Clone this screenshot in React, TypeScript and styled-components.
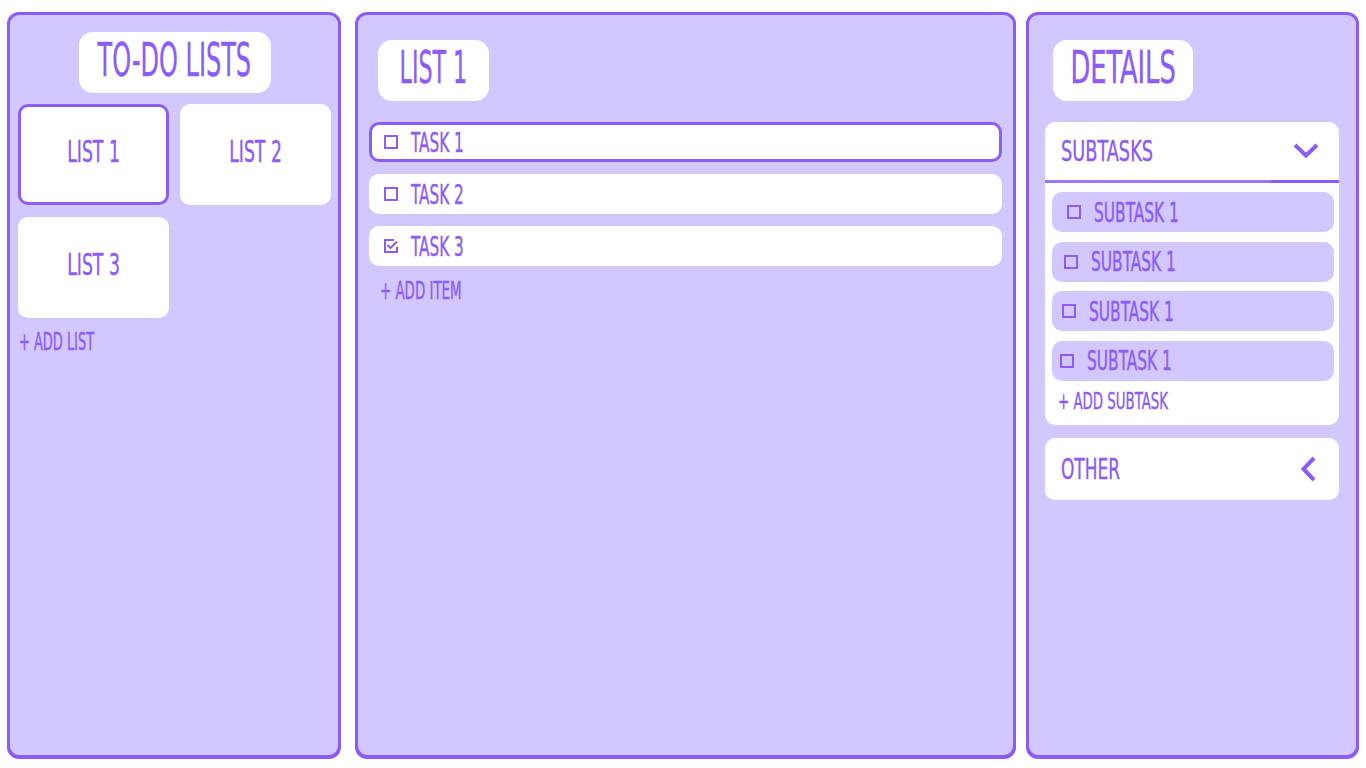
import styled, { createGlobalStyle } from "styled-components";

const PURPLE = "#8b5cf6";
const LAVENDER = "#d3c7ff";

const GlobalStyle = createGlobalStyle`
  html, body {
    margin: 0;
    padding: 0;
    background: #ffffff;
  }
  body {
    font-family: "Liberation Sans Narrow", "DejaVu Sans Condensed", "Liberation Sans", sans-serif;
    color: ${PURPLE};
  }
`;

const Page = styled.main`
  box-sizing: border-box;
  height: 100vh;
  padding: 12px 8px 10px 7px;
  display: flex;
`;

const Panel = styled.section<{ $pad: string; $width: number; $ml?: number }>`
  box-sizing: border-box;
  flex: 0 0 ${({ $width }) => $width}px;
  margin-left: ${({ $ml }) => $ml ?? 0}px;
  background: ${LAVENDER};
  border: 3px solid ${PURPLE};
  border-radius: 12px;
  box-shadow: 0 1px 0 ${PURPLE};
  padding: ${({ $pad }) => $pad};
  display: flex;
  flex-direction: column;
`;

/* condensed caps, stand-in for a Bebas style face */
const Label = styled.span<{ $size: number; $sx?: number; $origin?: string }>`
  display: inline-block;
  font-size: ${({ $size }) => $size}px;
  line-height: 1;
  white-space: nowrap;
  -webkit-text-stroke: 0.4px currentColor;
  transform: scaleX(${({ $sx }) => $sx ?? 0.62});
  transform-origin: ${({ $origin }) => $origin ?? "left center"};
`;

const TitlePill = styled.div<{ $width: number; $offset?: number; $center?: boolean }>`
  box-sizing: border-box;
  width: ${({ $width }) => $width}px;
  height: 61px;
  padding-bottom: 6px;
  background: #fff;
  border-radius: 14px;
  display: flex;
  align-items: center;
  justify-content: center;
  align-self: ${({ $center }) => ($center ? "center" : "flex-start")};
  margin-left: ${({ $offset }) => $offset ?? 0}px;
`;

const ListGrid = styled.div`
  margin-top: 11px;
  display: grid;
  grid-template-columns: 151px 151px;
  grid-auto-rows: 101px;
  gap: 12px 11px;
`;

const ListCard = styled.div<{ $active?: boolean }>`
  box-sizing: border-box;
  background: #fff;
  border: 3px solid ${({ $active }) => ($active ? PURPLE : "transparent")};
  border-radius: 10px;
  padding-bottom: 6px;
  display: flex;
  align-items: center;
  justify-content: center;
`;

const AddLink = styled.div<{ $top: number; $left: number }>`
  margin-top: ${({ $top }) => $top}px;
  padding-left: ${({ $left }) => $left}px;
`;

const TaskList = styled.div`
  margin-top: 21px;
  display: flex;
  flex-direction: column;
  gap: 12px;
`;

const TaskRow = styled.div<{ $active?: boolean }>`
  box-sizing: border-box;
  height: 40px;
  background: #fff;
  border: 3px solid ${({ $active }) => ($active ? PURPLE : "transparent")};
  border-radius: 10px;
  padding-left: 12px;
  display: flex;
  align-items: center;
  gap: 13px;
`;

const Card = styled.div<{ $top: number }>`
  margin-top: ${({ $top }) => $top}px;
  background: #fff;
  border-radius: 10px;
  overflow: hidden;
`;

const CardHeader = styled.div<{ $height: number; $right: number }>`
  box-sizing: border-box;
  height: ${({ $height }) => $height}px;
  padding: 0 ${({ $right }) => $right}px 0 16px;
  display: flex;
  align-items: center;
  justify-content: space-between;
`;

const Underline = styled.div`
  height: 3px;
  background: linear-gradient(to right, #9b74f7 77%, ${PURPLE} 77%);
`;

const CardBody = styled.div`
  padding: 9px 5px 12px 7px;
  display: flex;
  flex-direction: column;
  gap: 9.6px;
`;

const SubtaskRow = styled.div<{ $indent: number }>`
  box-sizing: border-box;
  height: 40px;
  background: ${LAVENDER};
  border-radius: 10px;
  padding-left: ${({ $indent }) => $indent}px;
  display: flex;
  align-items: center;
  gap: 13px;
`;

const Box = ({ checked }: { checked?: boolean }) => (
  <svg width={14} height={14} viewBox="0 0 14 14" fill="none" stroke={PURPLE} strokeWidth={2}>
    {checked ? (
      <>
        <path d="M10 1 H1 V13 H13 V8" />
        <path d="M3.5 6 L6.5 9 L13 2.5" />
      </>
    ) : (
      <rect x={1} y={1} width={12} height={12} />
    )}
  </svg>
);

const ChevronDown = () => (
  <svg width="26" height="16" viewBox="0 0 26 16" fill="none" stroke={PURPLE} strokeWidth={4}>
    <path d="M2 2 L13 12.5 L24 2" />
  </svg>
);

const ChevronLeft = () => (
  <svg width="16" height="26" viewBox="0 0 16 26" fill="none" stroke={PURPLE} strokeWidth={4}>
    <path d="M14 2 L3.5 13 L14 24" />
  </svg>
);

const tasks = [
  { name: "TASK 1", active: true, done: false },
  { name: "TASK 2", active: false, done: false },
  { name: "TASK 3", active: false, done: true },
];

const subtasks = [15, 12, 10, 8];

export default function App() {
  return (
    <>
      <GlobalStyle />
      <Page>
        <Panel $width={333} $pad="17px 7px 0 8px">
          <TitlePill $width={192} $center>
            <Label $size={46} $sx={0.58} $origin="center">TO-DO LISTS</Label>
          </TitlePill>
          <ListGrid>
            <ListCard $active>
              <Label $size={31} $origin="center">LIST 1</Label>
            </ListCard>
            <ListCard>
              <Label $size={31} $origin="center">LIST 2</Label>
            </ListCard>
            <ListCard>
              <Label $size={31} $origin="center">LIST 3</Label>
            </ListCard>
          </ListGrid>
          <AddLink $top={12} $left={1}>
            <Label $size={24} $sx={0.6}>+ ADD LIST</Label>
          </AddLink>
        </Panel>

        <Panel $width={661} $ml={14} $pad="25px 11px 0 11px">
          <TitlePill $width={111} $offset={9}>
            <Label $size={44} $sx={0.56} $origin="center">LIST 1</Label>
          </TitlePill>
          <TaskList>
            {tasks.map((t) => (
              <TaskRow key={t.name} $active={t.active}>
                <Box checked={t.done} />
                <Label $size={27} $sx={0.63}>{t.name}</Label>
              </TaskRow>
            ))}
          </TaskList>
          <AddLink $top={13} $left={11}>
            <Label $size={24}>+ ADD ITEM</Label>
          </AddLink>
        </Panel>

        <Panel $width={333} $ml={10} $pad="25px 17px 0 16px">
          <TitlePill $width={140} $offset={8}>
            <Label $size={44} $sx={0.65} $origin="center">DETAILS</Label>
          </TitlePill>
          <Card $top={21}>
            <CardHeader $height={58} $right={20}>
              <Label $size={29} $sx={0.68}>SUBTASKS</Label>
              <ChevronDown />
            </CardHeader>
            <Underline />
            <CardBody>
              {subtasks.map((indent, i) => (
                <SubtaskRow key={i} $indent={indent}>
                  <Box />
                  <Label $size={27} $sx={0.635}>SUBTASK 1</Label>
                </SubtaskRow>
              ))}
              <AddLink $top={0} $left={6}>
                <Label $size={23} $sx={0.645}>+ ADD SUBTASK</Label>
              </AddLink>
            </CardBody>
          </Card>
          <Card $top={13}>
            <CardHeader $height={62} $right={23}>
              <Label $size={29} $sx={0.65}>OTHER</Label>
              <ChevronLeft />
            </CardHeader>
          </Card>
        </Panel>
      </Page>
    </>
  );
}
